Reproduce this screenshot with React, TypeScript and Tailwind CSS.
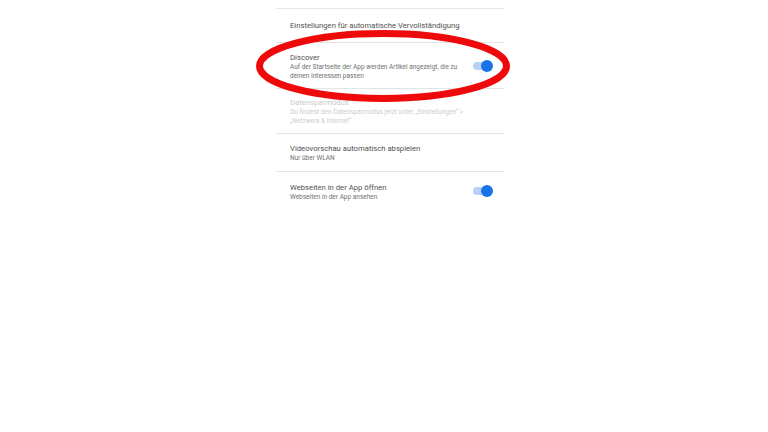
import React from "react";

function Toggle() {
  return (
    <div className="relative w-[20px] h-[12px] flex items-center mr-[1px]">
      <div className="w-[19px] h-[8px] rounded-full bg-[#b8d2f7]" />
      <div className="absolute right-0 top-0 w-[12px] h-[12px] rounded-full bg-[#1a73e8]" />
    </div>
  );
}

function Row({
  title,
  sub,
  disabled,
  toggle,
  h,
}: {
  title: string;
  sub?: React.ReactNode;
  disabled?: boolean;
  toggle?: boolean;
  h: string;
}) {
  return (
    <div className={`flex items-center justify-between border-b border-[#e4e4e4] pl-[14px] pr-[10px] ${h}`}>
      <div className="flex flex-col pt-[1px]">
        <div className={`text-[7.7px] leading-[11px] ${disabled ? "text-[#cacaca]" : "text-[#505050]"}`}>{title}</div>
        {sub && (
          <div className={`text-[6.5px] leading-[9px] ${disabled ? "text-[#cdcdcd]" : "text-[#707070]"}`}>{sub}</div>
        )}
      </div>
      {toggle && <Toggle />}
    </div>
  );
}

export default function App() {
  return (
    <div className="relative w-[768px] h-[432px] bg-white overflow-hidden" style={{ fontFamily: "Roboto, 'Liberation Sans', sans-serif" }}>
      <div className="ml-[276px] w-[228px] pt-[8px]">
        <div className="border-t border-[#e6e6e6]" />
        <div className="flex items-center border-b border-[#e4e4e4] pl-[14px] h-[34px]">
          <div className="text-[7.7px] leading-[11px] text-[#505050]">Einstellungen für automatische Vervollständigung</div>
        </div>
        <Row
          h="h-[46px]"
          title="Discover"
          sub={<>Auf der Startseite der App werden Artikel angezeigt, die zu<br />deinen Interessen passen</>}
          toggle
        />
        <Row
          h="h-[45px]"
          title="Datensparmodus"
          sub={<>Du findest den Datensparmodus jetzt unter „Einstellungen“ &gt;<br />„Netzwerk &amp; Internet“</>}
          disabled
        />
        <Row h="h-[38px]" title="Videovorschau automatisch abspielen" sub="Nur über WLAN" />
        <div className="flex items-center justify-between pl-[14px] pr-[10px] h-[38px]">
          <div className="flex flex-col pt-[1px]">
            <div className="text-[7.7px] leading-[11px] text-[#505050]">Webseiten in der App öffnen</div>
            <div className="text-[6.5px] leading-[9px] text-[#707070]">Webseiten in der App ansehen</div>
          </div>
          <Toggle />
        </div>
      </div>
      <svg className="absolute left-0 top-0 pointer-events-none" width="768" height="432" viewBox="0 0 768 432">
        <ellipse cx="383" cy="66" rx="123.5" ry="32.5" fill="none" stroke="#ee0a0a" strokeWidth="7" />
      </svg>
    </div>
  );
}
